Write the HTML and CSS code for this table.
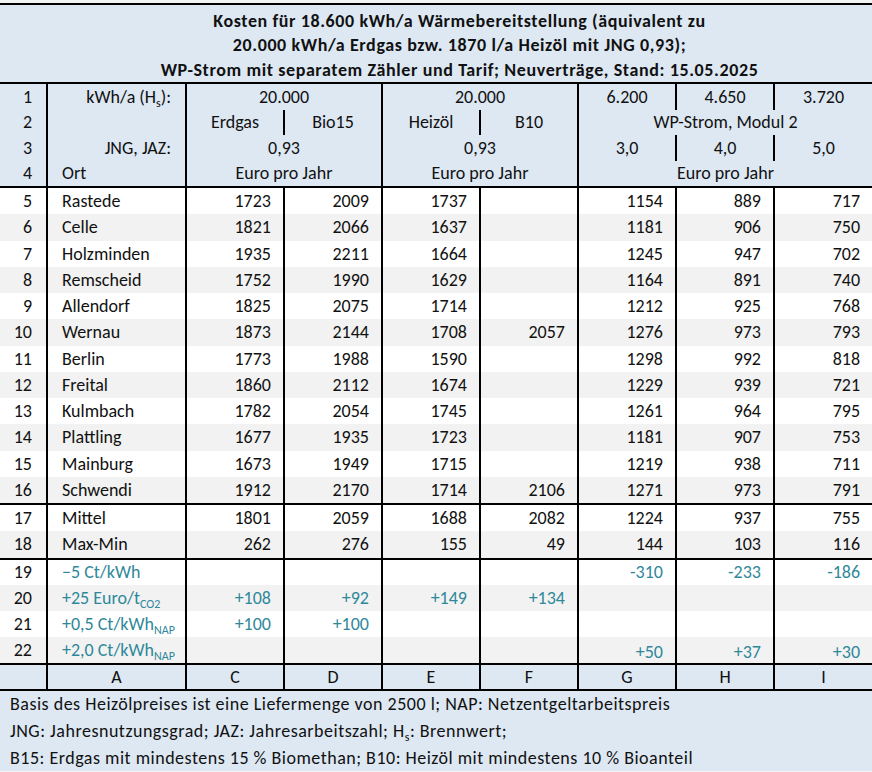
FILE: index.html
```html
<!DOCTYPE html>
<html lang="de">
<head>
<meta charset="utf-8">
<title>Kosten Wärmebereitstellung</title>
<link rel="stylesheet" href="styles.css">
</head>
<body>
<table class="sheet">
  <colgroup>
    <col class="col-n"><col class="col-a">
    <col class="col-v"><col class="col-v"><col class="col-v"><col class="col-v"><col class="col-v"><col class="col-v"><col class="col-v">
  </colgroup>
  <thead>
    <tr class="title">
      <th colspan="9">Kosten für 18.600 kWh/a Wärmebereitstellung (äquivalent zu<br>20.000 kWh/a Erdgas bzw. 1870 l/a Heizöl mit JNG 0,93);<br>WP-Strom mit separatem Zähler und Tarif; Neuverträge, Stand: 15.05.2025</th>
    </tr>
    <tr class="hd">
      <td class="n">1</td><td class="a r">kWh/a (H<sub>s</sub>):</td>
      <td colspan="2" class="c">20.000</td><td colspan="2" class="c bl">20.000</td>
      <td class="c bl sp">6.200</td><td class="c sp">4.650</td><td class="c">3.720</td>
    </tr>
    <tr class="hd">
      <td class="n">2</td><td class="a"></td>
      <td class="c sp">Erdgas</td><td class="c">Bio15</td>
      <td class="c bl sp">Heizöl</td><td class="c">B10</td>
      <td colspan="3" class="c bl">WP-Strom, Modul 2</td>
    </tr>
    <tr class="hd">
      <td class="n">3</td><td class="a r">JNG, JAZ:</td>
      <td colspan="2" class="c">0,93</td><td colspan="2" class="c bl">0,93</td>
      <td class="c bl sp">3,0</td><td class="c sp">4,0</td><td class="c">5,0</td>
    </tr>
    <tr class="hd last">
      <td class="n">4</td><td class="a">Ort</td>
      <td colspan="2" class="c">Euro pro Jahr</td><td colspan="2" class="c bl">Euro pro Jahr</td>
      <td colspan="3" class="c bl">Euro pro Jahr</td>
    </tr>
  </thead>
  <tbody class="data">
    <tr><td class="n">5</td><td class="a">Rastede</td><td>1723</td><td>2009</td><td>1737</td><td></td><td>1154</td><td>889</td><td>717</td></tr>
    <tr><td class="n">6</td><td class="a">Celle</td><td>1821</td><td>2066</td><td>1637</td><td></td><td>1181</td><td>906</td><td>750</td></tr>
    <tr><td class="n">7</td><td class="a">Holzminden</td><td>1935</td><td>2211</td><td>1664</td><td></td><td>1245</td><td>947</td><td>702</td></tr>
    <tr><td class="n">8</td><td class="a">Remscheid</td><td>1752</td><td>1990</td><td>1629</td><td></td><td>1164</td><td>891</td><td>740</td></tr>
    <tr><td class="n">9</td><td class="a">Allendorf</td><td>1825</td><td>2075</td><td>1714</td><td></td><td>1212</td><td>925</td><td>768</td></tr>
    <tr><td class="n">10</td><td class="a">Wernau</td><td>1873</td><td>2144</td><td>1708</td><td>2057</td><td>1276</td><td>973</td><td>793</td></tr>
    <tr><td class="n">11</td><td class="a">Berlin</td><td>1773</td><td>1988</td><td>1590</td><td></td><td>1298</td><td>992</td><td>818</td></tr>
    <tr><td class="n">12</td><td class="a">Freital</td><td>1860</td><td>2112</td><td>1674</td><td></td><td>1229</td><td>939</td><td>721</td></tr>
    <tr><td class="n">13</td><td class="a">Kulmbach</td><td>1782</td><td>2054</td><td>1745</td><td></td><td>1261</td><td>964</td><td>795</td></tr>
    <tr><td class="n">14</td><td class="a">Plattling</td><td>1677</td><td>1935</td><td>1723</td><td></td><td>1181</td><td>907</td><td>753</td></tr>
    <tr><td class="n">15</td><td class="a">Mainburg</td><td>1673</td><td>1949</td><td>1715</td><td></td><td>1219</td><td>938</td><td>711</td></tr>
    <tr class="end"><td class="n">16</td><td class="a">Schwendi</td><td>1912</td><td>2170</td><td>1714</td><td>2106</td><td>1271</td><td>973</td><td>791</td></tr>
  </tbody>
  <tbody class="data">
    <tr><td class="n">17</td><td class="a">Mittel</td><td>1801</td><td>2059</td><td>1688</td><td>2082</td><td>1224</td><td>937</td><td>755</td></tr>
    <tr class="end"><td class="n">18</td><td class="a">Max-Min</td><td>262</td><td>276</td><td>155</td><td>49</td><td>144</td><td>103</td><td>116</td></tr>
  </tbody>
  <tbody class="data extra">
    <tr><td class="n">19</td><td class="a">−5 Ct/kWh</td><td></td><td></td><td></td><td></td><td>-310</td><td>-233</td><td>-186</td></tr>
    <tr><td class="n">20</td><td class="a">+25 Euro/t<sub>CO2</sub></td><td>+108</td><td>+92</td><td>+149</td><td>+134</td><td></td><td></td><td></td></tr>
    <tr><td class="n">21</td><td class="a">+0,5 Ct/kWh<sub>NAP</sub></td><td>+100</td><td>+100</td><td></td><td></td><td></td><td></td><td></td></tr>
    <tr class="end"><td class="n">22</td><td class="a">+2,0 Ct/kWh<sub>NAP</sub></td><td></td><td></td><td></td><td></td><td class="low">+50</td><td class="low">+37</td><td class="low">+30</td></tr>
  </tbody>
  <tfoot>
    <tr class="letters"><td class="n"></td><td class="a">A</td><td>C</td><td>D</td><td>E</td><td>F</td><td>G</td><td>H</td><td>I</td></tr>
    <tr class="note"><td colspan="9">Basis des Heizölpreises ist eine Liefermenge von 2500 l; NAP: Netzentgeltarbeitspreis</td></tr>
    <tr class="note"><td colspan="9">JNG: Jahresnutzungsgrad; JAZ: Jahresarbeitszahl; H<sub>s</sub>: Brennwert;</td></tr>
    <tr class="note"><td colspan="9">B15: Erdgas mit mindestens 15 % Biomethan; B10: Heizöl mit mindestens 10 % Bioanteil</td></tr>
  </tfoot>
</table>
</body>
</html>
```

FILE: styles.css
```css
html, body {
  margin: 0;
  padding: 0;
  background: #f3f5f7;
}

body {
  padding-top: 3px;
  font-family: Carlito, Lato, "Open Sans", sans-serif;
  font-size: 18px;
  color: #111;
}

.sheet {
  width: 872px;
  border-collapse: collapse;
  table-layout: fixed;
  background: #fff;
}

.col-n { width: 47px; }
.col-a { width: 139px; }
.col-v { width: 98px; }

.sheet td, .sheet th {
  padding: 0 12px;
  line-height: 22px;
  white-space: nowrap;
  vertical-align: middle;
}

sub {
  font-size: 12px;
  line-height: 0;
  vertical-align: -4px;
}

/* title */
.title th {
  background: #dde8f3;
  border-top: 2px solid #000;
  border-bottom: 2px solid #000;
  font-weight: bold;
  text-align: center;
  line-height: 24.3px;
  letter-spacing: 0.6px;
  height: 73px;
  padding: 4px 0 0 47px;
  vertical-align: top;
}

/* header rows */
.hd td {
  background: #dde8f3;
  height: 25.5px;
}
.hd.last td { border-bottom: 2px solid #000; }

.n {
  text-align: right;
  padding-right: 14px !important;
  border-right: 2px solid #000;
}
.a {
  text-align: left;
  padding-left: 14px !important;
  border-right: 2px solid #000;
}
.r { text-align: right !important; padding-right: 14px !important; }
.c { text-align: center; }
.bl { border-left: 2px solid #000; }
.sp { border-right: 2px solid #000; }

/* data */
.data td {
  height: 26.25px;
  text-align: right;
  border-left: 2px solid #000;
}
.data td.n { border-left: 0; }
.data td.a { text-align: left; }
.data tr:nth-child(even) td { background: #f2f2f2; }
.data tr.end td { border-bottom: 2px solid #000; }

.extra td { height: 25.8px; color: #2f889a; }
.extra td.n { color: #111; }
.extra td.low { vertical-align: bottom; padding-bottom: 0; }

/* letters */
.letters td {
  background: #dde8f3;
  height: 24px;
  text-align: center;
  border-left: 2px solid #000;
  border-bottom: 2px solid #000;
}
.letters td.n { border-left: 0; }
.letters td.a { text-align: center; padding-left: 12px !important; }

/* notes */
.note td {
  background: #dde8f3;
  height: 26.8px;
  padding-left: 10px;
  letter-spacing: 0.5px;
}
```
